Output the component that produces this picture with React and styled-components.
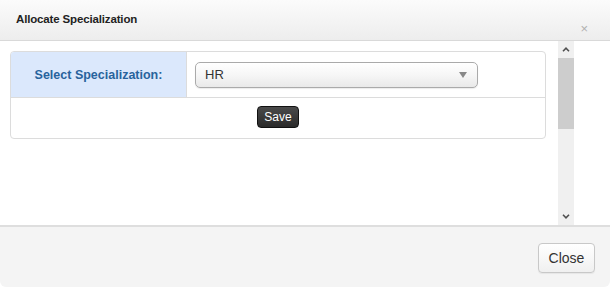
import React, {useState} from 'react';
import styled, {createGlobalStyle} from 'styled-components';

const GlobalStyle = createGlobalStyle`
    html, body {
        margin: 0;
        padding: 0;
        background: #fff;
    }
    body {
        font-family: "Liberation Sans", Arial, sans-serif;
        color: #333;
    }
`

const Dialog = styled.div`
    width: 610px;
    height: 287px;
    display: flex;
    flex-direction: column;
    background: #fff;
    overflow: hidden;
`

const Header = styled.div`
    height: 40px;
    flex: none;
    display: flex;
    align-items: flex-start;
    justify-content: space-between;
    padding: 0 22px 0 16px;
    border-bottom: 1px solid #d9d9d9;
    background: linear-gradient(to bottom, #fbfbfb 0%, #ededed 100%);
`

const Title = styled.h4`
    margin: 13px 0 0;
    font-size: 11.5px;
    letter-spacing: -0.15px;
    font-weight: bold;
    color: #222;
`

const CloseX = styled.span`
    margin-top: 22px;
    font-size: 13px;
    line-height: 1;
    color: #b0b0b0;
`

const Body = styled.div`
    flex: 1;
    display: flex;
    min-height: 0;
`

const Pane = styled.div`
    width: 558px;
    box-sizing: border-box;
    overflow: hidden;
    padding: 10px 12px 0 10px;
`

const ScrollBar = styled.div`
    width: 16px;
    display: flex;
    flex-direction: column;
    background: #f0f0f0;
`

const ScrollArrow = styled.div`
    height: 17px;
    flex: none;
    display: flex;
    align-items: center;
    justify-content: center;
`

const ScrollTrack = styled.div`
    flex: 1;
`

const ScrollThumb = styled.div`
    height: ${p => p.size}px;
    background: #cdcdcd;
`

const Table = styled.div`
    border: 1px solid #dcdcdc;
    border-radius: 4px;
    overflow: hidden;
`

const Row = styled.div`
    display: flex;
    height: ${p => p.h}px;
    border-top: ${p => p.first ? 'none' : '1px solid #dcdcdc'};
    justify-content: ${p => p.center ? 'center' : 'flex-start'};
    align-items: center;
`

const LabelCell = styled.div`
    width: 175px;
    height: 100%;
    display: flex;
    align-items: center;
    justify-content: center;
    background: #dbe8fc;
    border-right: 1px solid #dcdcdc;
    color: #28639c;
    font-size: 12.5px;
    font-weight: bold;
`

const FieldCell = styled.div`
    flex: 1;
    padding-left: 8px;
`

const Select = styled.div`
    width: 283px;
    height: 26px;
    box-sizing: border-box;
    display: flex;
    align-items: center;
    justify-content: space-between;
    padding: 0 10px 0 9px;
    border: 1px solid #aaa;
    border-radius: 5px;
    background: linear-gradient(to bottom, #ffffff 0%, #f6f6f6 50%, #e9e9e9 100%);
    box-shadow: 0 1px 1px rgba(0,0,0,0.08);
    font-size: 13px;
    color: #333;
`

const Caret = styled.span`
    width: 0;
    height: 0;
    border-left: 4px solid transparent;
    border-right: 4px solid transparent;
    border-top: 6px solid #888;
`

const SaveButton = styled.button`
    height: 22px;
    padding: 0 6px;
    margin-top: -3px;
    border: 1px solid #111;
    border-radius: 4px;
    background: linear-gradient(to bottom, #4a4a4a 0%, #2a2a2a 100%);
    color: #fff;
    font-family: "Liberation Sans", Arial, sans-serif;
    font-size: 12px;
    cursor: pointer;
`

const Footer = styled.div`
    height: 60px;
    flex: none;
    display: flex;
    align-items: center;
    justify-content: flex-end;
    padding-right: 15px;
    border-top: 2px solid #dedede;
    background: #f4f4f4;
    border-radius: 0 0 6px 6px;
`

const CloseButton = styled.button`
    width: 57px;
    height: 30px;
    margin-top: 1px;
    border: 1px solid #c8c8c8;
    border-radius: 4px;
    background: linear-gradient(to bottom, #ffffff 0%, #f0f0f0 100%);
    box-shadow: 0 1px 1px rgba(0,0,0,0.06);
    color: #333;
    font-family: "Liberation Sans", Arial, sans-serif;
    font-size: 14px;
    cursor: pointer;
`

const Chevron = ({up}) => (
    <svg width="8" height="5" viewBox="0 0 8 5">
        <path d={up ? 'M1 4.2 L4 1.2 L7 4.2' : 'M1 0.8 L4 3.8 L7 0.8'} fill="none" stroke="#505050" strokeWidth="1.6"/>
    </svg>
)

const App = () => {
    const [spec] = useState('HR');
    return(
        <>
        <GlobalStyle/>
        <Dialog>
            <Header>
                <Title>Allocate Specialization</Title>
                <CloseX>×</CloseX>
            </Header>
            <Body>
                <Pane>
                    <Table>
                        <Row first h={45}>
                            <LabelCell>Select Specialization:</LabelCell>
                            <FieldCell>
                                <Select>{spec}<Caret/></Select>
                            </FieldCell>
                        </Row>
                        <Row center h={40}>
                            <SaveButton>Save</SaveButton>
                        </Row>
                    </Table>
                </Pane>
                <ScrollBar>
                    <ScrollArrow><Chevron up/></ScrollArrow>
                    <ScrollTrack><ScrollThumb size={71}/></ScrollTrack>
                    <ScrollArrow><Chevron/></ScrollArrow>
                </ScrollBar>
            </Body>
            <Footer>
                <CloseButton>Close</CloseButton>
            </Footer>
        </Dialog>
        </>
    )
}

export default App
